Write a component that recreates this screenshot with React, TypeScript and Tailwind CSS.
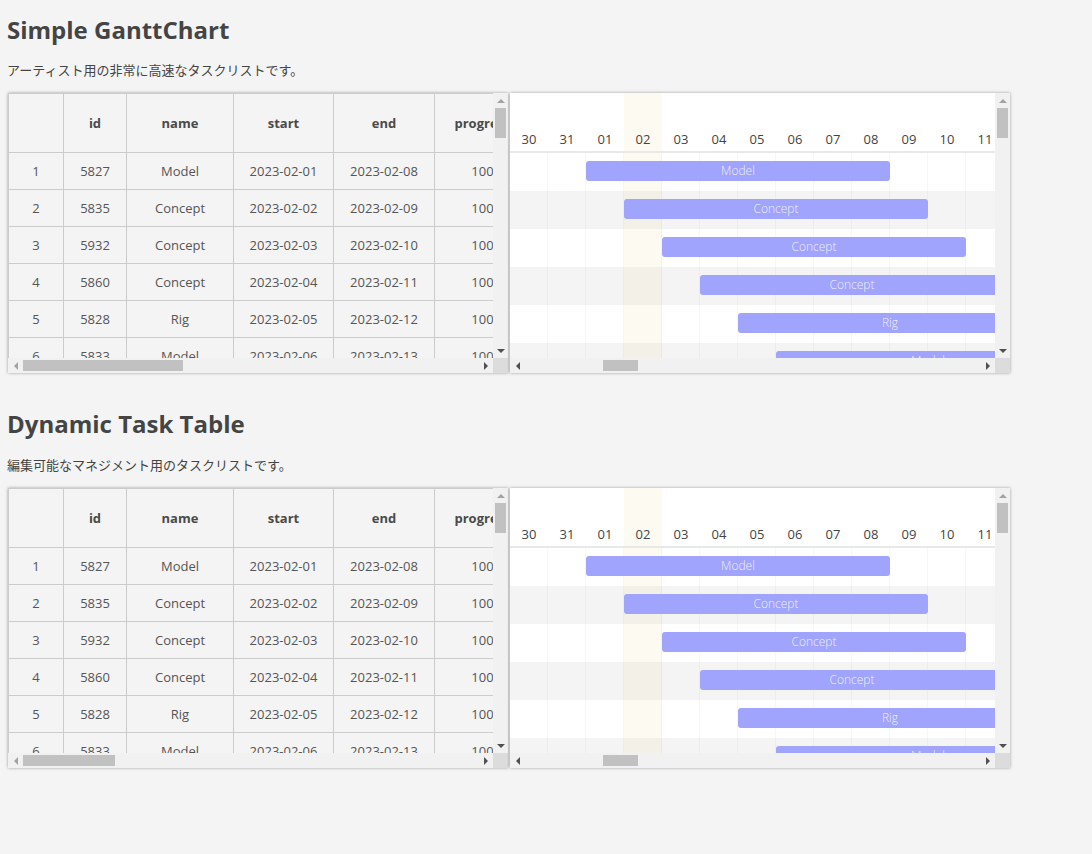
import React from 'react';

type Row = { n: number; id: number; name: string; start: string; end: string };

const rows: Row[] = [
  { n: 1, id: 5827, name: 'Model', start: '2023-02-01', end: '2023-02-08' },
  { n: 2, id: 5835, name: 'Concept', start: '2023-02-02', end: '2023-02-09' },
  { n: 3, id: 5932, name: 'Concept', start: '2023-02-03', end: '2023-02-10' },
  { n: 4, id: 5860, name: 'Concept', start: '2023-02-04', end: '2023-02-11' },
  { n: 5, id: 5828, name: 'Rig', start: '2023-02-05', end: '2023-02-12' },
  { n: 6, id: 5833, name: 'Model', start: '2023-02-06', end: '2023-02-13' },
  { n: 7, id: 5841, name: 'Rig', start: '2023-02-07', end: '2023-02-14' },
];

const dates = ['30', '31', '01', '02', '03', '04', '05', '06', '07', '08', '09', '10', '11', '12', '13'];

const colW = ['w-[56px] border-l', 'w-[63px]', 'w-[107px]', 'w-[100px]', 'w-[101px]', 'w-[96px]'];

function UpArrow({ dim }: { dim?: boolean }) {
  return (
    <div className="h-[15px] flex items-center justify-center shrink-0">
      <div className={`w-0 h-0 border-x-[4px] border-x-transparent border-b-[4px] ${dim ? 'border-b-[#a3a3a3]' : 'border-b-[#505050]'}`} />
    </div>
  );
}
function DownArrow({ dim }: { dim?: boolean }) {
  return (
    <div className="h-[15px] flex items-center justify-center shrink-0">
      <div className={`w-0 h-0 border-x-[4px] border-x-transparent border-t-[4px] ${dim ? 'border-t-[#a3a3a3]' : 'border-t-[#505050]'}`} />
    </div>
  );
}
function LeftArrow({ dim }: { dim?: boolean }) {
  return (
    <div className="w-[15px] flex items-center justify-center shrink-0">
      <div className={`w-0 h-0 border-y-[4px] border-y-transparent border-r-[4px] ${dim ? 'border-r-[#a3a3a3]' : 'border-r-[#505050]'}`} />
    </div>
  );
}
function RightArrow({ dim }: { dim?: boolean }) {
  return (
    <div className="w-[15px] flex items-center justify-center shrink-0">
      <div className={`w-0 h-0 border-y-[4px] border-y-transparent border-l-[4px] ${dim ? 'border-l-[#a3a3a3]' : 'border-l-[#505050]'}`} />
    </div>
  );
}

function VScroll() {
  return (
    <div className="w-[15px] h-[265px] bg-[#f1f1f1] flex flex-col">
      <UpArrow dim />
      <div className="h-[30px] mx-[2px] bg-[#c1c1c1] shrink-0" />
      <div className="flex-1" />
      <DownArrow />
    </div>
  );
}

function HScroll({ offset, thumb }: { offset: 'left' | 'mid'; thumb: 'wide' | 'narrow' | 'small' }) {
  const thumbCls = thumb === 'wide' ? 'w-[160px]' : thumb === 'narrow' ? 'w-[92px]' : 'w-[35px]';
  return (
    <div className="h-[15px] w-[485px] bg-[#f1f1f1] flex">
      <LeftArrow dim={offset === 'left'} />
      {offset === 'mid' && <div className="w-[78px] shrink-0" />}
      <div className={`${thumbCls} my-[2px] bg-[#c1c1c1] shrink-0`} />
      <div className="flex-1" />
      <RightArrow />
    </div>
  );
}

function TablePanel({ thumb }: { thumb: 'wide' | 'narrow' }) {
  const header = ['', 'id', 'name', 'start', 'end', 'progress'];
  return (
    <div className="w-[500px] h-[280px] shadow-[0_0_3px_rgba(0,0,0,0.35)] bg-[#f4f4f4] grid grid-cols-[485px_15px] grid-rows-[265px_15px]">
      <div className="overflow-hidden">
        <div className="w-max border-t border-[#cccccc]">
          <div className="flex">
            {header.map((h, i) => (
              <div
                key={i}
                className={`${colW[i]} shrink-0 h-[59px] border-r border-b border-[#cccccc] flex items-center justify-center font-bold text-[13px] leading-[18px] text-[#4a4a4a] whitespace-nowrap`}
              >
                {h}
              </div>
            ))}
          </div>
          {rows.map((r) => {
            const cells = [String(r.n), String(r.id), r.name, r.start, r.end, '100'];
            return (
              <div key={r.n} className="flex">
                {cells.map((c, i) => (
                  <div
                    key={i}
                    className={`${colW[i]} shrink-0 h-[37px] border-r border-b border-[#cccccc] flex items-center justify-center text-[13px] leading-[18px] text-[#555555] whitespace-nowrap`}
                  >
                    {c}
                  </div>
                ))}
              </div>
            );
          })}
        </div>
      </div>
      <VScroll />
      <HScroll offset="left" thumb={thumb} />
      <div className="bg-[#dcdcdc]" />
    </div>
  );
}

function GanttPanel() {
  return (
    <div className="w-[500px] h-[280px] shadow-[0_0_3px_rgba(0,0,0,0.35)] bg-white grid grid-cols-[485px_15px] grid-rows-[265px_15px]">
      <div className="overflow-hidden">
        <div className="w-max">
          <div className="flex h-[58px] border-b-2 border-[#e8e8e8] box-content">
            {dates.map((d, i) => (
              <div
                key={i}
                className={`w-[38px] shrink-0 flex items-end justify-center pb-[3px] text-[13px] leading-[18px] text-[#444444] ${i === 3 ? 'bg-[rgba(240,210,140,0.12)]' : ''}`}
              >
                {d}
              </div>
            ))}
          </div>
          {rows.map((r, ri) => (
            <div key={r.n} className={`relative flex h-[38px] ${ri % 2 === 1 ? 'bg-[#f4f4f4]' : 'bg-white'}`}>
              {dates.map((_, i) => (
                <div
                  key={i}
                  className={`w-[38px] shrink-0 border-r border-[rgba(0,0,0,0.03)] ${i === 3 ? 'bg-[rgba(240,210,140,0.12)]' : ''}`}
                />
              ))}
              <div
                className="absolute top-[8px] h-[20px] w-[304px] rounded-[3px] bg-[#a0a4fc] flex items-center justify-center text-[12px] leading-[20px] font-light text-[rgba(255,255,255,0.85)]"
                style={{ left: 76 + 38 * ri }}
              >
                {r.name}
              </div>
            </div>
          ))}
        </div>
      </div>
      <VScroll />
      <HScroll offset="mid" thumb="small" />
      <div className="bg-[#dcdcdc]" />
    </div>
  );
}

function Section({ title, subtitle, thumb, first }: { title: string; subtitle: string; thumb: 'wide' | 'narrow'; first?: boolean }) {
  return (
    <section className={first ? '' : 'mt-[35px]'}>
      <h2 className="text-[24px] leading-[32px] font-bold text-[#444444]">{title}</h2>
      <p className={`${first ? 'mt-[15px]' : 'mt-[16px]'} text-[13px] leading-[18px] text-[#444444]`}>{subtitle}</p>
      <div className="mt-[14px] ml-[1px] flex gap-[2px]">
        <TablePanel thumb={thumb} />
        <GanttPanel />
      </div>
    </section>
  );
}

export default function App() {
  return (
    <div className="min-h-screen bg-[#f4f4f4] pl-[7px] pt-[14px] font-['Open_Sans','Noto_Sans_CJK_JP',sans-serif]">
      <Section first title="Simple GanttChart" subtitle="アーティスト用の非常に高速なタスクリストです。" thumb="wide" />
      <Section title="Dynamic Task Table" subtitle="編集可能なマネジメント用のタスクリストです。" thumb="narrow" />
    </div>
  );
}
